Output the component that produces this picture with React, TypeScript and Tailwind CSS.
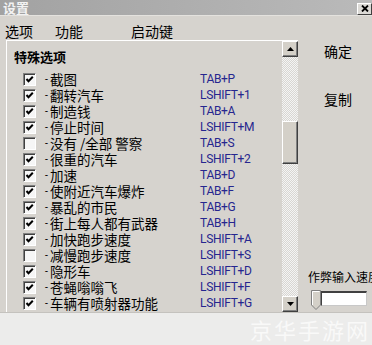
import React from "react";

const rows: [string, string, boolean][] = [
  ["截图", "TAB+P", true],
  ["翻转汽车", "LSHIFT+1", true],
  ["制造钱", "TAB+A", true],
  ["停止时间", "LSHIFT+M", true],
  ["没有 /全部 警察", "TAB+S", false],
  ["很重的汽车", "LSHIFT+2", true],
  ["加速", "TAB+D", true],
  ["使附近汽车爆炸", "TAB+F", true],
  ["暴乱的市民", "TAB+G", true],
  ["街上每人都有武器", "TAB+H", true],
  ["加快跑步速度", "LSHIFT+A", true],
  ["减慢跑步速度", "LSHIFT+S", false],
  ["隐形车", "LSHIFT+D", true],
  ["苍蝇嗡嗡飞", "LSHIFT+F", true],
  ["车辆有喷射器功能", "LSHIFT+G", true],
];

function Check({ on }: { on: boolean }) {
  return (
    <span className="w-[13px] h-[13px] shrink-0 border border-t-[#808080] border-l-[#808080] border-b-white border-r-white bg-[#f6f6f6] shadow-[inset_1px_1px_0_#404040] flex items-center justify-center">
      {on && (
        <svg width="9" height="9" viewBox="0 0 9 9">
          <path d="M1.5 4 L3.5 6.2 L7.8 1.8" stroke="#000" strokeWidth="2" fill="none" />
        </svg>
      )}
    </span>
  );
}

function ScrollBtn({ up }: { up: boolean }) {
  return (
    <div className="w-[16px] h-[16px] shrink-0 bg-[#d4d0c8] border border-t-white border-l-white border-b-[#404040] border-r-[#404040] shadow-[inset_-1px_-1px_0_#808080] flex items-center justify-center">
      <svg width="7" height="4" viewBox="0 0 7 4">
        {up ? <path d="M3.5 0 L7 4 L0 4 Z" fill="#000" /> : <path d="M0 0 L7 0 L3.5 4 Z" fill="#000" />}
      </svg>
    </div>
  );
}

export default function App() {
  const track =
    "bg-[repeating-conic-gradient(#f4f4f4_0_25%,#d8d6d2_0_50%)] bg-[length:2px_2px]";
  return (
    <div className="w-[372px] h-[345px] overflow-hidden bg-[#d6d3ce] flex flex-col font-['Noto_Sans_CJK_SC',sans-serif] text-black">
      {/* title bar */}
      <div className="h-[16px] shrink-0 bg-gradient-to-r from-[#a2a2a2] to-[#bababa] flex items-center justify-between border-b border-[#e4e2de]">
        <span className="pl-[3px] text-[13px] leading-[15px] font-bold text-[#f2f2f2]">设置</span>
        <div className="w-[15px] h-[12px] mt-[2px] bg-[#dcdad6] border border-t-white border-l-white border-b-[#404040] border-r-[#404040] flex items-center justify-center">
          <svg width="8" height="7" viewBox="0 0 8 7">
            <path d="M1 0.5 L7 6.5 M7 0.5 L1 6.5" stroke="#000" strokeWidth="1.8" />
          </svg>
        </div>
      </div>
      {/* menu */}
      <div className="h-[24px] shrink-0 flex items-center pt-[5px] pl-[5px] text-[14px] leading-[16px]">
        <span>选项</span>
        <span className="ml-[22px]">功能</span>
        <span className="ml-[48px]">启动键</span>
      </div>
      {/* body */}
      <div className="h-[272px] shrink-0 flex">
        <div className="ml-[6px] flex border-l border-t border-white">
          <div className="w-[275px] flex flex-col">
            <div className="h-[22px] mt-[5px] pl-[7px] flex items-center text-[13px] font-bold leading-[16px]">
              特殊选项
            </div>
            <div className="mt-[3px] flex flex-col">
              {rows.map(([label, key, on]) => (
                <div key={label} className="h-[16px] flex items-center pl-[16px]">
                  <Check on={on} />
                  <span className="w-[14px] text-right pr-[2px] text-[10px] leading-[16px] font-['Liberation_Sans',sans-serif]">-</span>
                  <span className="w-[150px] text-[13.5px] leading-[16px] whitespace-nowrap">{label}</span>
                  <span className="text-[12px] leading-[16px] tracking-[-0.3px] text-[#26268f] font-['Roboto',sans-serif]">{key}</span>
                </div>
              ))}
            </div>
          </div>
          {/* scrollbar */}
          <div className={`w-[16px] flex flex-col ${track}`}>
            <ScrollBtn up />
            <div className="h-[64px]" />
            <div className="h-[43px] bg-[#d4d0c8] border border-t-white border-l-white border-b-[#404040] border-r-[#404040] shadow-[inset_-1px_-1px_0_#808080]" />
            <div className="flex-1" />
            <ScrollBtn up={false} />
          </div>
        </div>
        {/* right column */}
        <div className="flex-1 flex flex-col pl-[26px] text-[14px] leading-[16px]">
          <span className="mt-[3px]">确定</span>
          <span className="mt-[32px]">复制</span>
          <span className="mt-[163px] -ml-[16px] text-[12px] leading-[14px] whitespace-nowrap">作弊输入速度</span>
          <div className="mt-[6px] -ml-[13px] flex items-start">
            <svg width="10" height="20" viewBox="0 0 10 20" className="shrink-0">
              <path d="M0.5 0.5 H9.5 V15 L5 19.5 L0.5 15 Z" fill="#d4d0c8" stroke="#808080" />
              <path d="M1.5 1.5 H8.5" stroke="#fff" />
              <path d="M1.5 1.5 V15" stroke="#fff" />
            </svg>
            <div className="w-[46px] h-[15px] mt-[1px] bg-white border border-t-[#404040] border-l-[#404040] border-b-[#c8c8c8] border-r-[#c8c8c8] border-t-2" />
          </div>
        </div>
      </div>
      {/* bottom strip */}
      <div className="flex-1 bg-[#ececeb] border-t border-[#c4c2be] flex items-end justify-end pr-[2px] pb-[3px]">
        <span className="text-[22px] leading-[26px] tracking-[2px] text-white/70">京华手游网</span>
      </div>
    </div>
  );
}
